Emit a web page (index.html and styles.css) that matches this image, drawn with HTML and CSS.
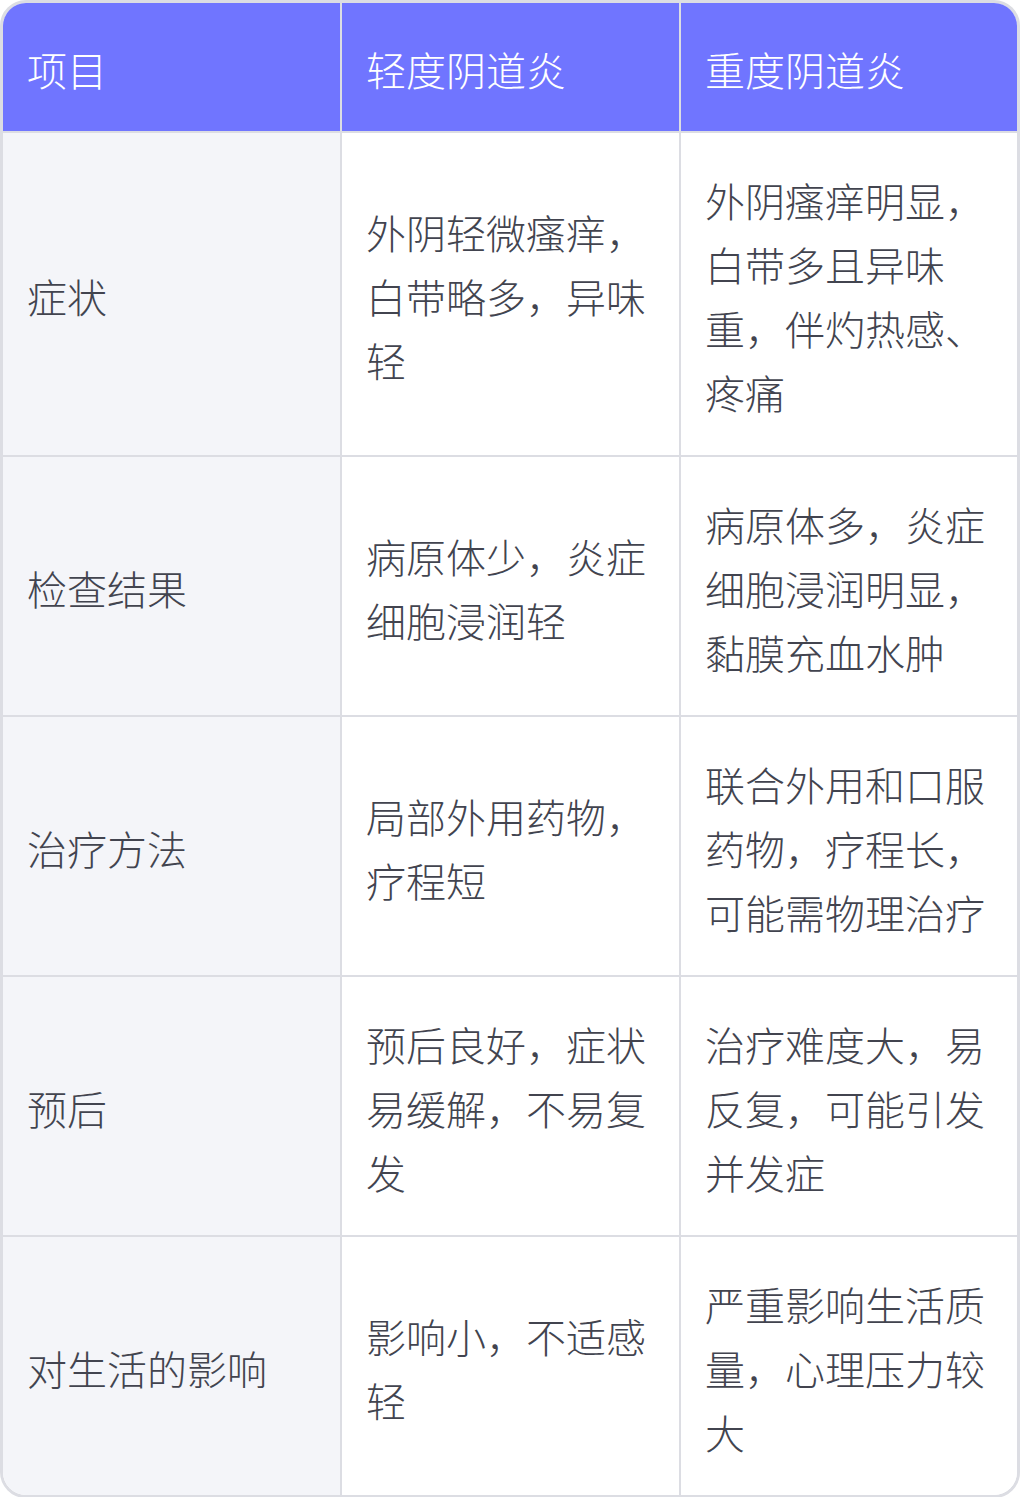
FILE: index.html
```html
<!DOCTYPE html>
<html lang="zh-CN">
<head>
<meta charset="utf-8">
<link rel="stylesheet" href="styles.css">
</head>
<body>
<div class="table">
  <div class="cell head">项目</div>
  <div class="cell head">轻度阴道炎</div>
  <div class="cell head last-col">重度阴道炎</div>

  <div class="cell label">症状</div>
  <div class="cell">外阴轻微瘙痒，白带略多，异味轻</div>
  <div class="cell last-col">外阴瘙痒明显，白带多且异味重，伴灼热感、疼痛</div>

  <div class="cell label">检查结果</div>
  <div class="cell">病原体少，炎症细胞浸润轻</div>
  <div class="cell last-col">病原体多，炎症细胞浸润明显，黏膜充血水肿</div>

  <div class="cell label">治疗方法</div>
  <div class="cell">局部外用药物，疗程短</div>
  <div class="cell last-col">联合外用和口服药物，疗程长，可能需物理治疗</div>

  <div class="cell label">预后</div>
  <div class="cell">预后良好，症状易缓解，不易复发</div>
  <div class="cell last-col">治疗难度大，易反复，可能引发并发症</div>

  <div class="cell label last-row">对生活的影响</div>
  <div class="cell last-row">影响小，不适感轻</div>
  <div class="cell last-col last-row">严重影响生活质量，心理压力较大</div>
</div>
</body>
</html>
```

FILE: styles.css
```css
* { box-sizing: border-box; }
html, body {
  margin: 0;
  padding: 0;
  background: #ffffff;
}
.table {
  width: 1020px;
  border: 3px solid #dcdde3;
  border-radius: 26px;
  overflow: hidden;
  display: grid;
  grid-template-columns: 339px 339px 1fr;
  font-family: "Noto Sans CJK SC", "Noto Sans", sans-serif;
  font-weight: 300;
  font-size: 40px;
  line-height: 64px;
  color: #42444f;
}
.cell {
  padding: 35px 24px 31px 24px;
  border-right: 2px solid #dcdde3;
  border-bottom: 2px solid #dcdde3;
  display: flex;
  align-items: center;
  background: #ffffff;
}
.cell.last-col { border-right: none; }
.cell.last-row { border-bottom: none; }
.cell.head {
  padding-top: 34px;
  padding-bottom: 30px;
  background: #7075ff;
  color: #ffffff;
}
.cell.label {
  background: #f4f5f9;
}
```
